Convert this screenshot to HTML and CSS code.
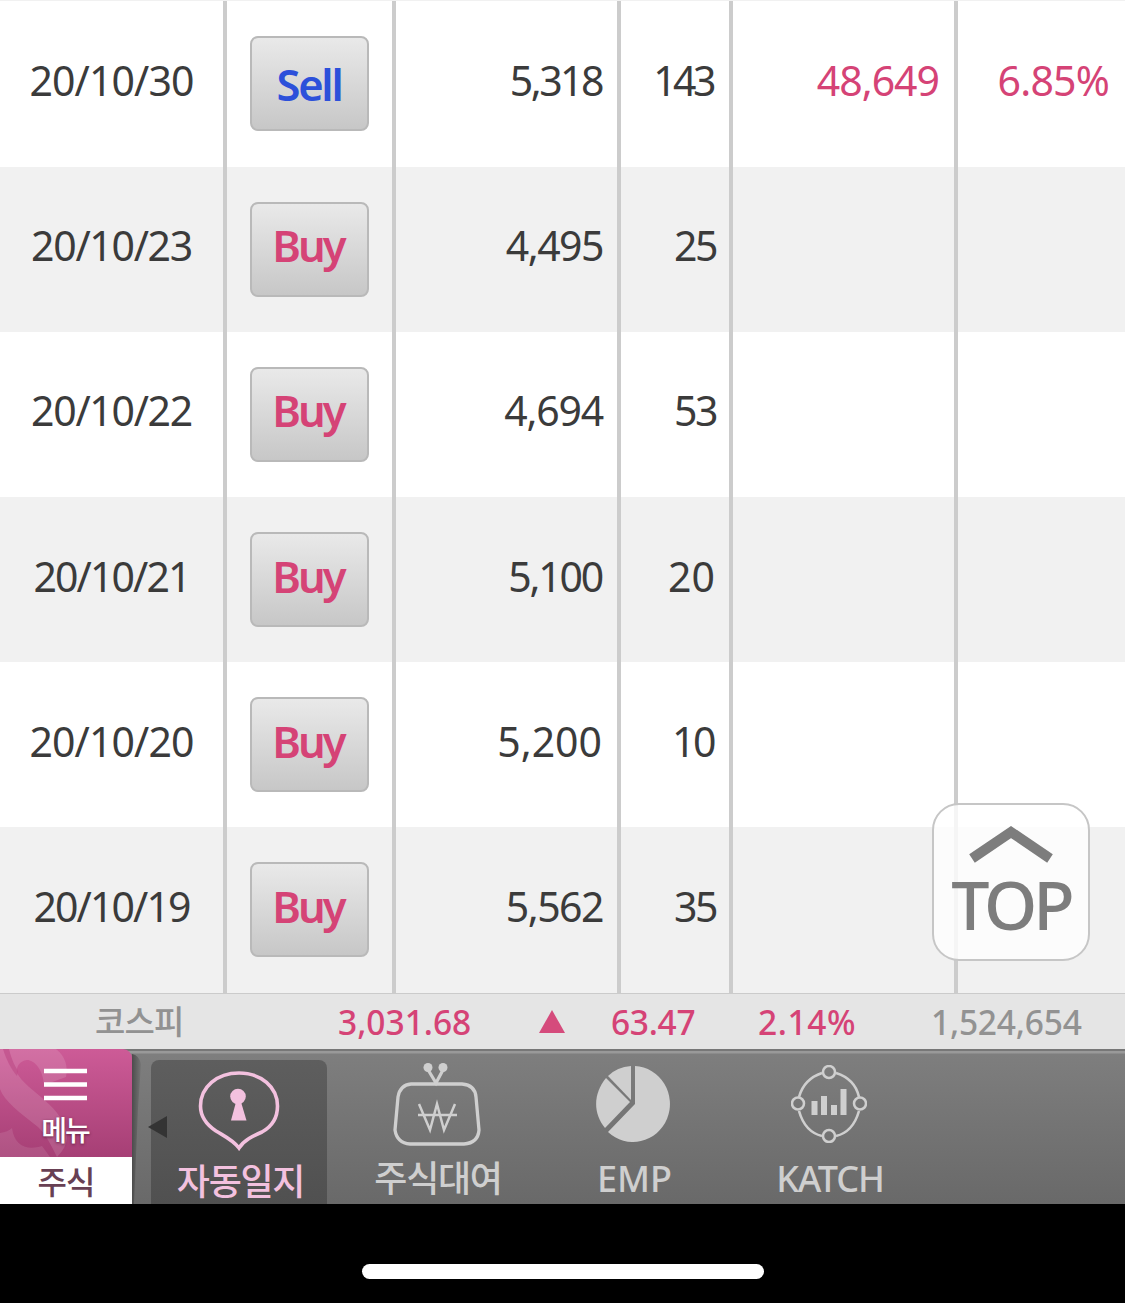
FILE: index.html
```html
<!DOCTYPE html>
<html lang="ko">
<head>
<meta charset="utf-8">
<title>자동일지</title>
<link rel="stylesheet" href="styles.css">
</head>
<body>
<main class="trades">
  <div class="row">
    <div class="cell date"><span class="d1">20/10/30</span></div>
    <div class="cell act"><button class="btn sell">Sell</button></div>
    <div class="cell num"><span class="p1">5,318</span></div>
    <div class="cell num"><span class="q1">143</span></div>
    <div class="cell num gain"><span class="g1">48,649</span></div>
    <div class="cell num gain"><span class="g2">6.85%</span></div>
  </div>
  <div class="row">
    <div class="cell date"><span class="d2">20/10/23</span></div>
    <div class="cell act"><button class="btn">Buy</button></div>
    <div class="cell num"><span>4,495</span></div>
    <div class="cell num"><span class="q2">25</span></div>
    <div class="cell"></div><div class="cell"></div>
  </div>
  <div class="row">
    <div class="cell date"><span class="d2">20/10/22</span></div>
    <div class="cell act"><button class="btn">Buy</button></div>
    <div class="cell num"><span class="p3">4,694</span></div>
    <div class="cell num"><span class="q2">53</span></div>
    <div class="cell"></div><div class="cell"></div>
  </div>
  <div class="row">
    <div class="cell date"><span class="d4">20/10/21</span></div>
    <div class="cell act"><button class="btn">Buy</button></div>
    <div class="cell num"><span class="p4">5,100</span></div>
    <div class="cell num"><span class="q4">20</span></div>
    <div class="cell"></div><div class="cell"></div>
  </div>
  <div class="row">
    <div class="cell date"><span class="d1">20/10/20</span></div>
    <div class="cell act"><button class="btn">Buy</button></div>
    <div class="cell num"><span class="p5">5,200</span></div>
    <div class="cell num"><span class="q5">10</span></div>
    <div class="cell"></div><div class="cell"></div>
  </div>
  <div class="row">
    <div class="cell date"><span class="d6">20/10/19</span></div>
    <div class="cell act"><button class="btn">Buy</button></div>
    <div class="cell num"><span class="p6">5,562</span></div>
    <div class="cell num"><span class="q2">35</span></div>
    <div class="cell"></div><div class="cell"></div>
  </div>
  <a class="top">
    <svg width="86" height="38" viewBox="0 0 86 38"><path d="M4 33.500 43 7 82 33.500" fill="none" stroke="#7d7d7d" stroke-width="10"/></svg>
    <span>TOP</span>
  </a>
</main>
<section class="ticker">
  <span class="market">코스피</span>
  <span class="index">3,031.68</span>
  <svg class="up" width="26" height="23" viewBox="0 0 26 23"><path d="M13 0 26 23H0Z" fill="#d54b7c"/></svg>
  <span class="diff">63.47</span>
  <span class="rate">2.14%</span>
  <span class="volume">1,524,654</span>
</section>
<nav class="nav">
  <div class="menu">
    <div class="menu-top">
      <svg class="swirl" width="132" height="108" viewBox="0 0 132 108">
        <path d="M0 0H56C66 8 68 18 66 28L44 36C43 20 34 11 27 11C20 12 16 17 17 24C26 42 66 58 67 88Q67 98 57 108C50 94 46 86 38 78C20 64 4 52 0 40Z" fill="#fff" opacity=".13"/>
        <path d="M3 0H9C12 13 16 18 18 22L17 27C11 20 6 10 3 0Z" fill="#bd4a86" opacity=".6"/>
        <path d="M0 84Q8 83 12 79C14 96 26 102 42 97L50 108H0Z" fill="#fff" opacity=".1"/>
      </svg>
      <svg class="burger" width="43" height="33" viewBox="0 0 43 33"><path d="M0 3H43M0 16.500H43M0 30H43" stroke="#fff" stroke-width="4.500"/></svg>
      <span>메뉴</span>
    </div>
    <div class="menu-name"><span>주식</span></div>
  </div>
  <svg class="edge" width="19" height="155" viewBox="0 0 19 155">
    <defs><linearGradient id="shade" x1="0" x2="1"><stop offset="0" stop-color="#4c4c4c"/><stop offset="1" stop-color="#757575"/></linearGradient></defs>
    <path d="M0 5Q7 6 9 15L6 60 2 155H0Z" fill="url(#shade)"/>
  </svg>
  <div class="tab on">
    <svg class="arrow" width="19" height="22" viewBox="0 0 19 22"><path d="M0 11 19 0V22Z" fill="#343434"/></svg>
    <svg class="icon" width="82" height="82" viewBox="0 0 82 82">
      <path d="M41 4C63 4 79.500 18 79.500 37C79.500 50 73 58 64 63C55 67 46 71 41 79C35 71 26 67 18 62C9 56 2.500 48 2.500 37C2.500 18 19 4 41 4Z" fill="none" stroke="#f3c1df" stroke-width="3.600"/>
      <circle cx="40" cy="27.500" r="7.800" fill="#f3c1df"/><path d="M38 33H43L48.500 51.500H33Z" fill="#f3c1df"/>
    </svg>
    <span>자동일지</span>
  </div>
  <div class="tab lend">
    <svg class="icon" width="88" height="84" viewBox="0 0 88 84" fill="none" stroke="#cfcfcf">
      <path d="M34 5 43 20 51 5" stroke-width="3.200"/><circle cx="35" cy="4.500" r="4.500" fill="#cfcfcf" stroke="none"/><circle cx="50" cy="4.500" r="4.500" fill="#cfcfcf" stroke="none"/>
      <path d="M18 21H69Q82 22 83 34L86 67Q85 80 71 81H17Q4 80 2 67L5 34Q7 22 18 21Z" stroke-width="3.300"/>
      <path d="M26 41 37 67 44 41 51 67 62 41M25 52H64" stroke-width="2.500"/>
    </svg>
    <span>주식대여</span>
  </div>
  <div class="tab emp">
    <svg class="icon" width="76" height="78" viewBox="0 0 76 78" fill="#cfcfcf">
      <path d="M40 1A37 38 0 1 1 13 67L40 39Z"/><path d="M36 1V35L13 11Q22 2 36 1Z"/><path d="M11 13 35 37 10 63C-2 48-2 29 11 13Z"/>
    </svg>
    <span>EMP</span>
  </div>
  <div class="tab katch">
    <svg class="icon" width="76" height="78" viewBox="0 0 76 78" fill="none" stroke="#cfcfcf">
      <path d="M45 8Q64 14 68 32M68 46Q62 67 45 71M31 71Q14 67 8 46M8 32Q13 14 31 8" stroke-width="2.600"/>
      <g stroke-width="2.500"><circle cx="38" cy="7" r="6"/><circle cx="69" cy="38.500" r="6"/><circle cx="38" cy="71" r="6"/><circle cx="7" cy="38.500" r="6"/></g>
      <path d="M23.500 36V50M33 31V50M43 40V50M52.500 24V50" stroke-width="6"/>
    </svg>
    <span>KATCH</span>
  </div>
</nav>
<footer class="home"><div class="pill"></div></footer>
</body>
</html>
```
FILE: styles.css
```css
* { box-sizing: border-box; }
body {
  margin: 0;
  width: 1125px;
  height: 1303px;
  overflow: hidden;
  background: #000;
  color: #3b3b3b;
  font-family: "Noto Sans", "Noto Sans CJK KR", sans-serif;
}
span { white-space: nowrap; }

.trades {
  position: relative;
  height: 992px;
  padding-top: 1px;
  background: #f1f1f1;
  display: grid;
  grid-template-rows: 165.6px repeat(5, 165.2px);
}
.row {
  display: grid;
  grid-template-columns: 227px 169px 225px 112px 225px 167px;
  background: #fff;
}
.row:nth-child(even) { background: #f1f1f1; }
.cell {
  display: flex;
  align-items: center;
  border-right: 4px solid #ccc;
  font-size: 41px;
  line-height: 56px;
  padding-bottom: 8px;
}
.cell:last-of-type { border-right: 0; }
.date { justify-content: center; }
.num { justify-content: flex-end; padding-right: 14px; letter-spacing: -1.5px; }
.gain { color: #d54376; padding-right: 15px; letter-spacing: -1px; }
.d1 { letter-spacing: -.9px; }
.d2 { letter-spacing: -1.3px; }
.d4, .d6 { letter-spacing: -1.9px; }
.p1 { letter-spacing: -2.5px; margin-right: 1px; }
.p3 { letter-spacing: -1.2px; }
.p4 { letter-spacing: -2.2px; margin-right: 1px; }
.p5 { letter-spacing: 0; margin-right: 1px; }
.q1 { letter-spacing: -3.5px; margin-right: 2px; }
.q2 { letter-spacing: -2.5px; margin-right: -1px; }
.q4 { letter-spacing: 0; }
.q5 { letter-spacing: -2.5px; margin-right: 1px; }
.g2 { margin-right: 1px; letter-spacing: -.8px; }
.act { justify-content: center; padding: 0; }
.btn {
  width: 119px;
  height: 95px;
  padding: 0 3px 8px 0;
  border: 2px solid #b9b9b9;
  border-radius: 8px;
  background: linear-gradient(#e9e9e9, #c7c7c7);
  color: #d54376;
  font: 600 43.500px/60px "Noto Sans", sans-serif;
  letter-spacing: -3px;
}
.sell { color: #2c50da; padding: 0 1px 0 0; letter-spacing: -2.300px; }

.top {
  position: absolute;
  left: 932px;
  top: 803px;
  width: 158px;
  height: 158px;
  border: 2px solid #c6c6c6;
  border-radius: 27px;
  background: rgba(255, 255, 255, .8);
  color: #7d7d7d;
  display: flex;
  flex-direction: column;
  align-items: center;
  padding-top: 20px;
}
.top span { font-size: 68px; font-weight: 500; line-height: 82px; letter-spacing: -4px; }

.ticker {
  height: 57px;
  border-top: 2px solid #cbcbcb;
  background: #e5e5e5;
  color: #d54376;
  display: grid;
  grid-template-columns: 338px 201px 72px 147px 173px 1fr;
  align-items: center;
  font-size: 33.500px;
  font-weight: 500;
  line-height: 46px;
  padding-top: 1px;
}
.up { margin-top: -2px; }
.market { padding-left: 95px; color: #929292; font-family: "Noto Sans CJK KR", sans-serif; font-size: 33px; letter-spacing: -.8px; margin-top: -4px; }
.diff { letter-spacing: -.3px; }
.rate { letter-spacing: .6px; }
.volume { color: #929292; letter-spacing: -.2px; }

.nav {
  height: 155px;
  border-top: 2px solid #777;
  background: linear-gradient(#999 2px, #7e7e7e 3px, #696969);
  display: flex;
}
.menu { width: 132px; margin-top: -2px; }
.menu-top {
  position: relative;
  height: 108px;
  border-top-right-radius: 9px;
  background: linear-gradient(#cd5b97, #a63f75);
  color: #fff;
  display: flex;
  flex-direction: column;
  align-items: center;
  padding: 19px 2px 0 0;
  overflow: hidden;
}
.swirl { position: absolute; left: 0; top: 0; }
.burger { position: relative; }
.menu-top span { position: relative; font: 500 28px/40px "Noto Sans CJK KR", sans-serif; margin-top: 8px; letter-spacing: -2px; text-shadow: 0 1px 3px #602040; }
.menu-name { height: 47px; background: #fff; color: #684053; text-align: center; font: 500 32px/46px "Noto Sans CJK KR", sans-serif; letter-spacing: -1px; }
.edge { margin-top: -2px; }
.tab {
  position: relative;
  display: flex;
  flex-direction: column;
  align-items: center;
  color: #cfcfcf;
  font-size: 36px;
  font-weight: 500;
}
.tab span { font-family: "Noto Sans CJK KR", sans-serif; line-height: 50px; letter-spacing: -1.300px; }
.on {
  width: 176px;
  margin-top: 9px;
  border-radius: 8px 8px 0 0;
  background: linear-gradient(#5e5e5e, #505050);
  color: #f3c1df;
  padding-top: 9px;
}
.on span { margin: 3px 0 0 3px; }
.arrow { position: absolute; left: -3px; top: 56px; }
.lend { width: 220px; padding-top: 12px; }
.lend span { margin: 4px 0 0 2px; }
.emp { width: 171px; padding-top: 14px; }
.katch { width: 221px; padding-top: 14px; }
.emp span, .katch span { font-family: "Noto Sans", sans-serif; margin: 11px 0 0 4px; letter-spacing: 0; }
.katch span { letter-spacing: -1.100px; margin-left: 3px; }

.home { height: 99px; background: #000; display: flex; justify-content: center; padding-top: 60px; }
.pill { width: 402px; height: 15px; border-radius: 8px; background: #fff; }
```
